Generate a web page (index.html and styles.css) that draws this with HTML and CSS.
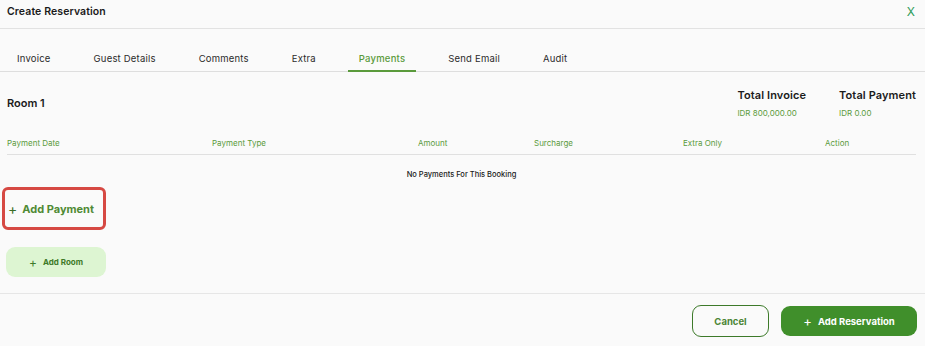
FILE: index.html
```html
<!DOCTYPE html>
<html lang="en">
<head>
  <meta charset="UTF-8" />
  <meta name="viewport" content="width=device-width, initial-scale=1.0"/>
  <title>Create Reservation</title>
  <link rel="stylesheet" href="styles.css">
</head>
<body>
  <header class="modal-header">
    <div class="modal-title">Create Reservation</div>
    <span class="close-btn">X</span>
  </header>

  <nav class="tabs">
    <span class="tab">Invoice</span>
    <span class="tab">Guest Details</span>
    <span class="tab">Comments</span>
    <span class="tab">Extra</span>
    <span class="tab active">Payments</span>
    <span class="tab">Send Email</span>
    <span class="tab">Audit</span>
  </nav>

  <main class="content">
    <div class="room-row">
      <div class="room-name">Room 1</div>
      <div class="totals">
        <div class="total">
          <div class="total-label">Total Invoice</div>
          <div class="total-value">IDR 800,000.00</div>
        </div>
        <div class="total">
          <div class="total-label">Total Payment</div>
          <div class="total-value">IDR 0.00</div>
        </div>
      </div>
    </div>

    <div class="table-head">
      <span>Payment Date</span>
      <span>Payment Type</span>
      <span>Amount</span>
      <span>Surcharge</span>
      <span>Extra Only</span>
      <span>Action</span>
    </div>
    <div class="empty-row">No Payments For This Booking</div>

    <div class="add-payment highlight">
      <span class="plus">+</span> Add Payment
    </div>

    <div class="add-room"><span class="plus">+</span> Add Room</div>
  </main>

  <footer class="modal-footer">
    <a class="btn btn-outline">Cancel</a>
    <a class="btn btn-primary"><span class="plus">+</span> Add Reservation</a>
  </footer>
</body>
</html>
```

FILE: styles.css
```css
  body {
    background-color: #fafafa;
    color: #1b1b1b;
    font-family: Inter, "Open Sans", sans-serif;
    margin: 0;
    padding: 0;
  }
  .modal-header {
    display: flex;
    justify-content: space-between;
    align-items: center;
    padding: 4px 10px 9px 7px;
    border-bottom: 1px solid #e2e2e2;
  }
  .modal-title {
    font-size: 10.5px;
    font-weight: 600;
    line-height: 14px;
    letter-spacing: 0.1px;
  }
  .close-btn {
    color: #2f9d5b;
    font-size: 12px;
    line-height: 14px;
    margin-top: 1px;
  }
  .tabs {
    display: flex;
    gap: 21px;
    padding-left: 6px;
    margin-top: 23px;
    border-bottom: 1px solid #dedede;
  }
  .tab {
    padding: 0 11px 5px 11px;
    font-size: 9.5px;
    line-height: 14px;
    letter-spacing: 0.2px;
    color: #2b2b2b;
  }
  .tab.active {
    color: #5a9a3c;
    font-weight: 500;
    border-bottom: 2px solid #5a9a3c;
    margin-bottom: -1px;
    padding-bottom: 4px;
  }
  .content {
    padding: 0 9px 0 7px;
  }
  .room-row {
    display: flex;
    justify-content: space-between;
    align-items: center;
    margin-top: 16px;
  }
  .room-name {
    font-size: 11px;
    font-weight: 600;
    margin-bottom: 1px;
  }
  .totals {
    display: flex;
    gap: 33px;
  }
  .total-label {
    font-size: 11px;
    font-weight: 600;
    line-height: 14px;
    letter-spacing: 0.1px;
  }
  .total-value {
    font-size: 8px;
    color: #5a9a3c;
    line-height: 12px;
    margin-top: 5px;
  }
  .table-head {
    display: grid;
    grid-template-columns: 205px 206px 116px 149px 142px 1fr;
    margin-top: 18px;
    padding-bottom: 5px;
    border-bottom: 1px solid #e0e0e0;
    font-size: 8px;
    line-height: 12px;
    color: #5a9a3c;
  }
  .empty-row {
    text-align: center;
    font-size: 7.5px;
    font-weight: 500;
    line-height: 12px;
    padding-top: 14px;
  }
  .add-payment {
    display: inline-flex;
    align-items: center;
    gap: 5px;
    margin-top: 6px;
    margin-left: -5px;
    height: 37px;
    padding: 0 9px 0 3px;
    font-size: 11px;
    font-weight: 700;
    color: #4f8a34;
  }
  .highlight {
    border: 3px solid #d64943;
    border-radius: 6px;
  }
  .add-payment .plus {
    font-weight: 400;
    font-size: 14px;
    color: #3b6d25;
  }
  .add-room {
    display: flex;
    align-items: center;
    justify-content: center;
    gap: 6px;
    width: 100px;
    height: 30px;
    margin: 17px 0 0 -1px;
    background: #ddf5d2;
    border-radius: 9px;
    font-size: 8px;
    font-weight: 700;
    color: #3e7a28;
  }
  .add-room .plus {
    font-size: 12px;
    font-weight: 400;
  }
  .modal-footer {
    display: flex;
    justify-content: flex-end;
    gap: 12px;
    margin-top: 16px;
    padding: 11px 8px 0 0;
    border-top: 1px solid #e6e6e6;
  }
  .btn {
    display: flex;
    align-items: center;
    justify-content: center;
    gap: 6px;
    border-radius: 9px;
    font-size: 9.5px;
    font-weight: 700;
    text-decoration: none;
  }
  .btn .plus {
    font-size: 13px;
    font-weight: 400;
  }
  .btn-outline {
    width: 75px;
    height: 30px;
    border: 1px solid #3d7a2a;
    color: #4c8535;
  }
  .btn-primary {
    width: 136px;
    height: 30px;
    margin-top: 1px;
    background: #408f2b;
    color: #ffffff;
  }
```
